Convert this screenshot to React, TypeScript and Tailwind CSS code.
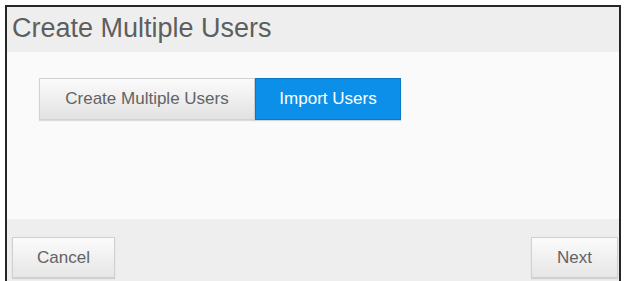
import React from 'react';

const CreateMultipleUsers: React.FC = () => {
  return (
    <div className="w-[626px] h-[281px] overflow-hidden bg-white pt-[5px] px-[5px] font-['Liberation_Sans',Arial,sans-serif]">
      <div className="flex flex-col h-[290px] border-2 border-b-0 border-[#262626]">
        {/* Header */}
        <div className="h-[45px] shrink-0 bg-[#eeeeee] flex items-center pl-[5px] pb-[3px]">
          <h1 className="text-[27px] leading-[30px] text-[#5e5e5e]">Create Multiple Users</h1>
        </div>

        {/* Body */}
        <div className="h-[167px] shrink-0 bg-[#fafafa] pt-[26px] pl-[32px]">
          <div className="flex">
            <button className="w-[216px] h-[42px] text-[17px] text-[#636363] bg-gradient-to-b from-[#fbfbfb] to-[#e2e2e2] border border-[#d2d2d2] shadow-[0_1px_1px_rgba(0,0,0,0.12)]">
              Create Multiple Users
            </button>
            <button className="w-[146px] h-[42px] text-[17px] text-white bg-[#0b8fe8] border border-[#0a78c8] shadow-[0_1px_1px_rgba(0,0,0,0.15)]">
              Import Users
            </button>
          </div>
        </div>

        {/* Footer */}
        <div className="flex-1 bg-[#eeeeee] flex justify-between items-start pt-[18px] pl-[5px] pr-[1px]">
          <button className="w-[103px] h-[41px] text-[17px] text-[#636363] bg-gradient-to-b from-[#fbfbfb] to-[#e6e6e6] border border-[#d0d0d0] shadow-[0_1px_1px_rgba(0,0,0,0.12)]">
            Cancel
          </button>
          <button className="w-[87px] h-[41px] text-[17px] text-[#636363] bg-gradient-to-b from-[#fbfbfb] to-[#e6e6e6] border border-[#d0d0d0] shadow-[0_1px_1px_rgba(0,0,0,0.12)]">
            Next
          </button>
        </div>
      </div>
    </div>
  );
};

export default function App() {
  return <CreateMultipleUsers />;
}
